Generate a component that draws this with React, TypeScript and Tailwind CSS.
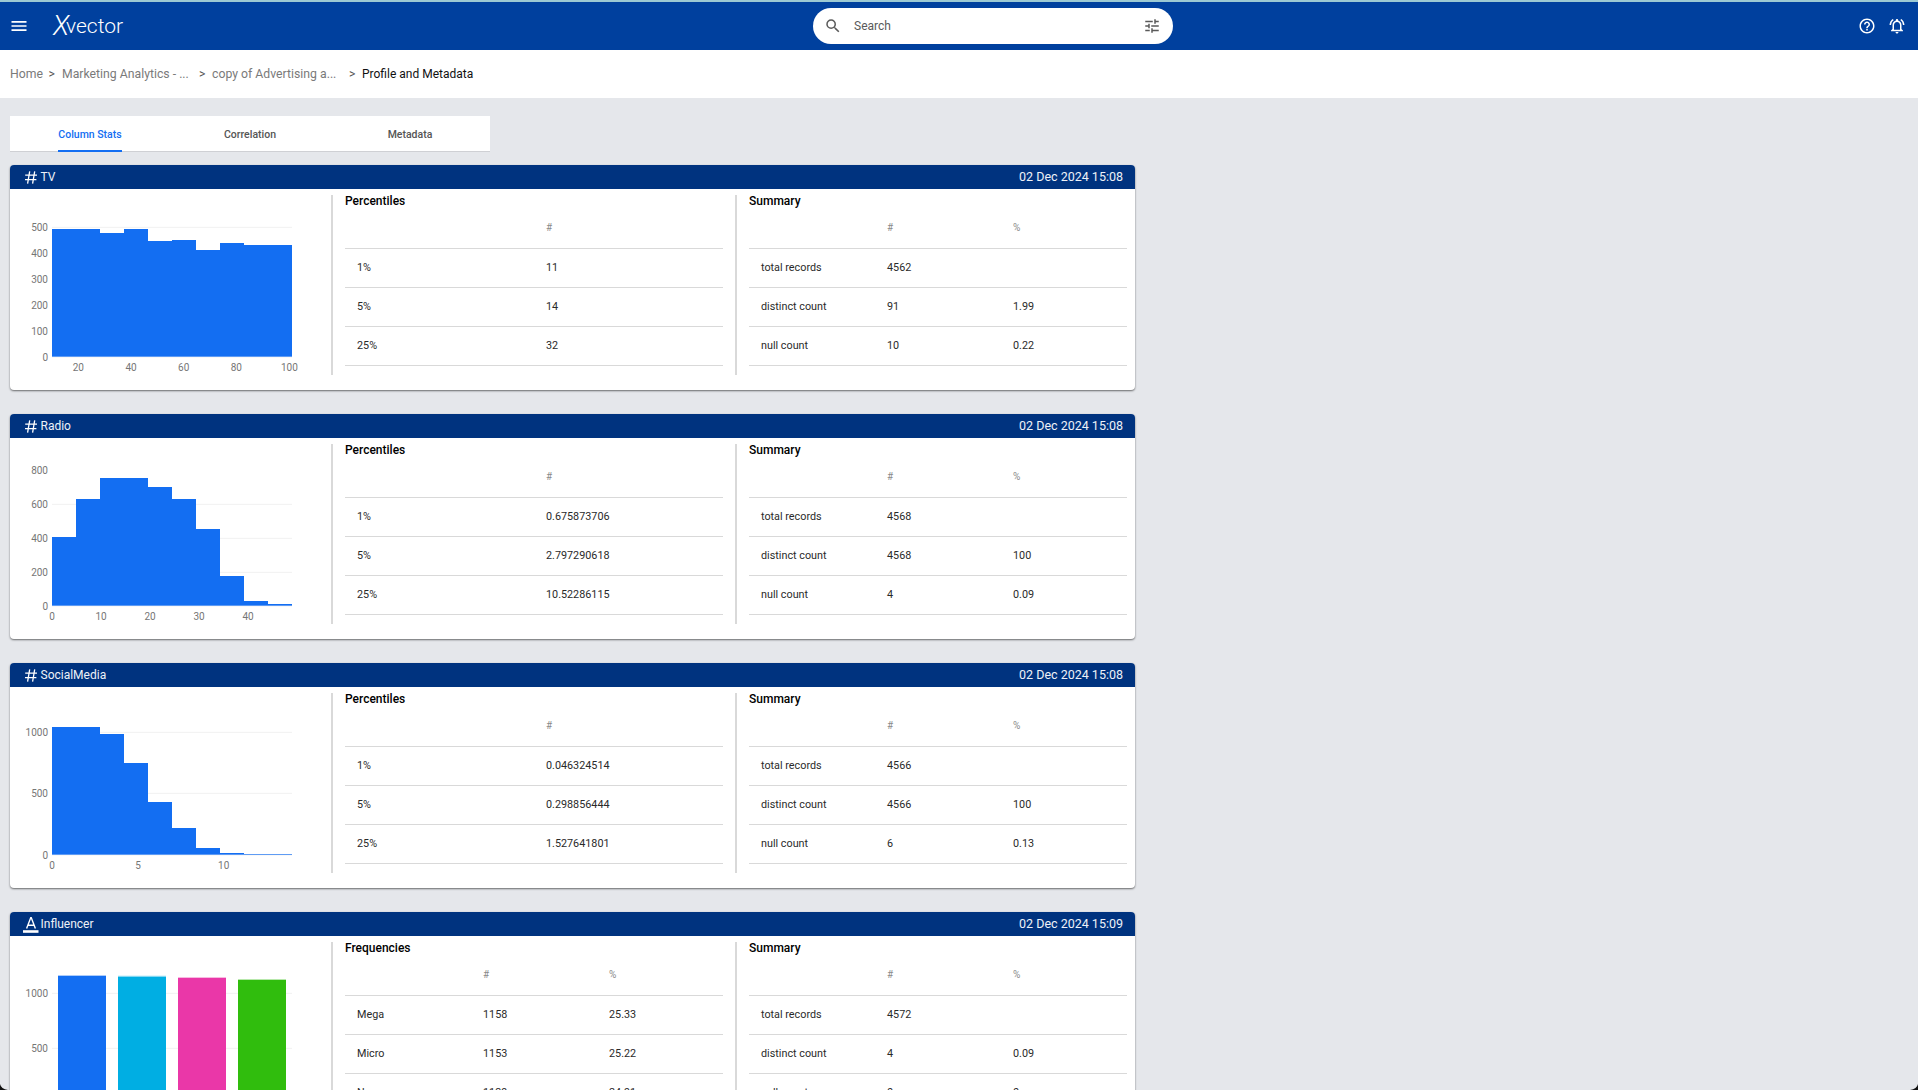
import { MdMenu, MdSearch, MdTune, MdHelpOutline, MdOutlineNotificationsActive } from 'react-icons/md';

type Bar = { x0: number; x1: number; top: number; color?: string };
type Tick = { label: string; pos: number };
type ChartData = {
  // all numbers are in 3x units, read off the zoomed reference
  originY: number;
  bottom: number;
  bars: Bar[];
  yTicks: Tick[];
  xTicks: Tick[];
  xLabelY: number;
  hiddenGrid?: string[];
  lighterTop?: boolean;
};

const BLUE = '#136ef2';

function blueBars(edges: number[], tops: number[]): Bar[] {
  return tops.map((top, i) => ({ x0: edges[i], x1: edges[i + 1], top }));
}

function Histogram({ chart }: { chart: ChartData }) {
  return (
    <svg width={321} height={201} viewBox={`30 ${chart.originY} 963 603`} className="block shrink-0">
      {chart.yTicks.map((t) =>
        chart.hiddenGrid?.includes(t.label) ? null : (
          <line key={t.label} x1={156} x2={876} y1={t.pos} y2={t.pos} stroke="#f1f1f1" strokeWidth={3} />
        ),
      )}
      {chart.bars.map((b, i) => (
        <g key={i}>
          {chart.lighterTop && (
            <rect x={b.x0} y={b.top - 3} width={b.x1 - b.x0} height={3} fill={b.color || BLUE} opacity={0.35} />
          )}
          <rect x={b.x0} y={b.top} width={b.x1 - b.x0} height={chart.bottom - b.top} fill={b.color || BLUE} />
        </g>
      ))}
      {chart.yTicks.map((t) => (
        <text key={t.label} x={144} y={t.pos + 11} textAnchor="end" fontSize={30} fill="#767676" fontFamily="Roboto, sans-serif">
          {t.label}
        </text>
      ))}
      {chart.xTicks.map((t) => (
        <text key={t.label} x={t.pos} y={chart.xLabelY} textAnchor="middle" fontSize={30} fill="#767676" fontFamily="Roboto, sans-serif">
          {t.label}
        </text>
      ))}
    </svg>
  );
}

function HashIcon() {
  return (
    <svg width={12} height={13} viewBox="0 0 12 13" stroke="white" strokeWidth={1.3} fill="none">
      <path d="M4.7 0.4 2.6 12.6M9.7 0.4 7.6 12.6M0.2 4.2H12M0 8.7H11.4" />
    </svg>
  );
}

function TextTypeIcon() {
  return (
    <svg width={16} height={16} viewBox="0 0 16 16" fill="none" className="translate-y-px">
      <path d="M3.6 11.6 7.8 0.6h0.4L12.4 11.6M5 8.2H11" stroke="white" strokeWidth={1.4} />
      <rect x={0} y={13.2} width={15.5} height={2.6} fill="white" />
    </svg>
  );
}

function StatTable({ title, cols, rows }: { title: string; cols: string[]; rows: string[][] }) {
  return (
    <div className="h-[180px] w-[392px] shrink-0 border-l-2 border-[#d9d9d9] pl-3">
      <h3 className="h-3 text-[12px] leading-3 font-medium text-black">{title}</h3>
      <table className="w-[378px] table-fixed border-collapse text-[10.8px] text-[#2a2a2a]">
        <thead>
          <tr className="h-[41px] border-b border-[#d9d9d9]">
            <th className="p-0" />
            {cols.map((c) => (
              <th key={c} className="pl-3 text-left text-[10px] font-normal text-[#8a8a8a]">
                {c}
              </th>
            ))}
          </tr>
        </thead>
        <tbody>
          {rows.map((r) => (
            <tr key={r[0]} className="h-[39px] border-b border-[#d9d9d9]">
              {r.map((v, i) => (
                <td key={i} className="pt-[2px] pl-3">
                  {v}
                </td>
              ))}
            </tr>
          ))}
        </tbody>
      </table>
    </div>
  );
}

type CardData = {
  icon: 'num' | 'text';
  name: string;
  date: string;
  chart: ChartData;
  leftTitle: string;
  leftCols: string[];
  leftRows: string[][];
  summary: string[][];
};

function ColumnCard({ card }: { card: CardData }) {
  return (
    <section className="w-[1125px] shrink-0 rounded bg-white shadow-[0_1px_2px_rgba(0,0,0,0.55)]">
      <div className="flex h-6 items-center justify-between rounded-t bg-[#00337f] pr-3 pl-[13px] text-[#eef2f8]">
        <div className="flex items-center">
          <span className="flex w-4 justify-center">{card.icon === 'num' ? <HashIcon /> : <TextTypeIcon />}</span>
          <span className="ml-[1.5px] text-[12px]">{card.name}</span>
        </div>
        <span className="text-[12.5px]">{card.date}</span>
      </div>
      <div className="flex h-[201px]">
        <Histogram chart={card.chart} />
        <div className="flex flex-1 gap-3 pt-1.5">
          <StatTable title={card.leftTitle} cols={card.leftCols} rows={card.leftRows} />
          <StatTable title="Summary" cols={['#', '%']} rows={card.summary} />
        </div>
      </div>
    </section>
  );
}

const cards: CardData[] = [
  {
    icon: 'num',
    name: 'TV',
    date: '02 Dec 2024 15:08',
    chart: {
      originY: 87,
      bottom: 590,
      bars: blueBars([156, 300, 372, 444, 516, 588, 660, 732, 876], [207, 219, 207, 243, 240, 270, 249, 255]),
      yTicks: [
        { label: '500', pos: 202 },
        { label: '400', pos: 280 },
        { label: '300', pos: 358 },
        { label: '200', pos: 435 },
        { label: '100', pos: 513 },
        { label: '0', pos: 591 },
      ],
      xTicks: [
        { label: '20', pos: 235 },
        { label: '40', pos: 393 },
        { label: '60', pos: 551 },
        { label: '80', pos: 709 },
        { label: '100', pos: 868 },
      ],
      xLabelY: 632,
    },
    leftTitle: 'Percentiles',
    leftCols: ['#'],
    leftRows: [
      ['1%', '11'],
      ['5%', '14'],
      ['25%', '32'],
    ],
    summary: [
      ['total records', '4562', ''],
      ['distinct count', '91', '1.99'],
      ['null count', '10', '0.22'],
    ],
  },
  {
    icon: 'num',
    name: 'Radio',
    date: '02 Dec 2024 15:08',
    chart: {
      originY: 84,
      bottom: 587,
      bars: blueBars([156, 228, 300, 444, 516, 588, 660, 732, 804, 876], [381, 267, 204, 231, 267, 357, 498, 573, 582]),
      yTicks: [
        { label: '800', pos: 182 },
        { label: '600', pos: 283 },
        { label: '400', pos: 385 },
        { label: '200', pos: 487 },
        { label: '0', pos: 588 },
      ],
      xTicks: [
        { label: '0', pos: 156 },
        { label: '10', pos: 303 },
        { label: '20', pos: 450 },
        { label: '30', pos: 597 },
        { label: '40', pos: 744 },
      ],
      xLabelY: 629,
      hiddenGrid: ['800'],
    },
    leftTitle: 'Percentiles',
    leftCols: ['#'],
    leftRows: [
      ['1%', '0.675873706'],
      ['5%', '2.797290618'],
      ['25%', '10.52286115'],
    ],
    summary: [
      ['total records', '4568', ''],
      ['distinct count', '4568', '100'],
      ['null count', '4', '0.09'],
    ],
  },
  {
    icon: 'num',
    name: 'SocialMedia',
    date: '02 Dec 2024 15:08',
    chart: {
      originY: 81,
      bottom: 584,
      bars: blueBars([156, 300, 372, 444, 516, 588, 660, 732, 876], [201, 222, 309, 426, 504, 564, 579, 582]),
      yTicks: [
        { label: '1000', pos: 217 },
        { label: '500', pos: 400 },
        { label: '0', pos: 585 },
      ],
      xTicks: [
        { label: '0', pos: 156 },
        { label: '5', pos: 414 },
        { label: '10', pos: 671 },
      ],
      xLabelY: 626,
    },
    leftTitle: 'Percentiles',
    leftCols: ['#'],
    leftRows: [
      ['1%', '0.046324514'],
      ['5%', '0.298856444'],
      ['25%', '1.527641801'],
    ],
    summary: [
      ['total records', '4566', ''],
      ['distinct count', '4566', '100'],
      ['null count', '6', '0.13'],
    ],
  },
  {
    icon: 'text',
    name: 'Influencer',
    date: '02 Dec 2024 15:09',
    chart: {
      originY: 108,
      bottom: 610,
      lighterTop: true,
      bars: [
        { x0: 174, x1: 318, top: 228, color: '#136ef2' },
        { x0: 354, x1: 498, top: 230, color: '#00aee3' },
        { x0: 534, x1: 678, top: 234, color: '#ea37a8' },
        { x0: 714, x1: 858, top: 240, color: '#30bd0d' },
      ],
      yTicks: [
        { label: '1000', pos: 280 },
        { label: '500', pos: 445 },
        { label: '0', pos: 611 },
      ],
      xTicks: [],
      xLabelY: 652,
    },
    leftTitle: 'Frequencies',
    leftCols: ['#', '%'],
    leftRows: [
      ['Mega', '1158', '25.33'],
      ['Micro', '1153', '25.22'],
      ['Nano', '1139', '24.91'],
    ],
    summary: [
      ['total records', '4572', ''],
      ['distinct count', '4', '0.09'],
      ['null count', '0', '0'],
    ],
  },
];

export default function App() {
  return (
    <div className="relative flex h-[1090px] flex-col overflow-hidden bg-[#e5e7eb] font-['Roboto',sans-serif]">
      <header className="relative flex h-[50px] shrink-0 items-center justify-between border-t-2 border-[#9cc9d3] bg-[#00409e] pr-[12px] pl-[9px] text-white">
        <div className="flex items-center">
          <MdMenu className="size-[20px]" />
          <span className="ml-6 flex items-center leading-none font-light">
            <span className="-mr-[3px] text-[27px] font-light italic">X</span>
            <span className="text-[21px]">vector</span>
          </span>
        </div>
        <div className="absolute top-1.5 left-[813px] flex h-9 w-[360px] items-center rounded-full bg-white pr-3 pl-[11px] text-[#5a5a5a]">
          <MdSearch className="size-[18px]" />
          <span className="ml-3 flex-1 text-[12px]">Search</span>
          <MdTune className="size-[18px]" />
        </div>
        <div className="flex items-center gap-3">
          <MdHelpOutline className="size-[18px]" />
          <MdOutlineNotificationsActive className="size-[18px]" />
        </div>
      </header>

      <nav className="flex h-12 shrink-0 items-center bg-white pl-2.5 text-[12.25px] text-[#7a7a7a]">
        <span className="w-[38.5px]">Home</span>
        <span className="w-[13.5px] text-[#555]">&gt;</span>
        <span className="w-[137px]">Marketing Analytics - ...</span>
        <span className="w-[13px] text-[#555]">&gt;</span>
        <span className="w-[137px]">copy of Advertising a...</span>
        <span className="w-[13px] text-[#555]">&gt;</span>
        <span className="text-[12px] text-[#111]">Profile and Metadata</span>
      </nav>

      <main className="flex flex-col pt-[18px] pl-2.5">
        <div className="flex h-9 w-[480px] border-b border-[#cfd0d4] bg-white text-[10.5px] font-medium text-[#555]">
          <div className="flex w-40 justify-center">
            <span className="flex h-9 items-center border-b-2 border-[#136ef2] pt-1 text-[#136ef2]">Column Stats</span>
          </div>
          <div className="flex w-40 items-center justify-center pt-[3px]">Correlation</div>
          <div className="flex w-40 items-center justify-center pt-[3px]">Metadata</div>
        </div>
        <div className="mt-[13px] flex flex-col gap-6">
          {cards.map((c) => (
            <ColumnCard key={c.name} card={c} />
          ))}
        </div>
      </main>

      {/* rounded window corners of the capture */}
      <svg width={8} height={6} viewBox="0 0 8 6" className="absolute bottom-0 left-0">
        <path d="M0 0Q1 5 8 6H0Z" fill="#111" />
      </svg>
      <svg width={8} height={6} viewBox="0 0 8 6" className="absolute right-0 bottom-0">
        <path d="M8 0Q7 5 0 6H8Z" fill="#111" />
      </svg>
    </div>
  );
}
